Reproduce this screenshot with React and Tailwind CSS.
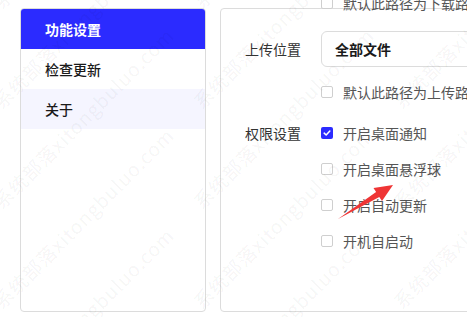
const FONT = { fontFamily: '"Noto Sans CJK SC", "Noto Sans", sans-serif' };

function Box({ checked }) {
  if (checked) {
    return (
      <span className="flex h-3 w-3 shrink-0 items-center justify-center rounded-[2px] bg-[#2b2bff]">
        <svg viewBox="0 0 12 12" className="h-[10px] w-[10px]">
          <path d="M2.6 6.2 L5 8.4 L9.4 3.6" fill="none" stroke="#fff" strokeWidth="1.8" strokeLinecap="round" strokeLinejoin="round" />
        </svg>
      </span>
    );
  }
  return <span className="h-3 w-3 shrink-0 rounded-[2px] border border-[#cfcfcf] bg-white" />;
}

function Option({ label, checked, className = '' }) {
  return (
    <div className={`flex h-5 items-center ${className}`}>
      <span className="w-[76px] shrink-0" />
      <Box checked={checked} />
      <span className="ml-[10px] whitespace-nowrap text-[14px] text-[#555]">{label}</span>
    </div>
  );
}

const marks = [];
for (let i = 0; i < 3; i++) {
  for (let j = 0; j < 5; j++) {
    marks.push({ x: 3 + 200 * i, y: -8 + 100 * j });
  }
}

export default function App() {
  return (
    <div className="relative h-[317px] w-[467px] overflow-hidden bg-white" style={FONT}>
      <div className="flex gap-[14px] pl-5 pt-2">
        {/* menu */}
        <div className="h-[304px] w-[186px] shrink-0 overflow-hidden rounded-[4px] border border-[#dcdcdc] bg-white">
          <div className="flex h-10 items-center bg-[#2b2bff] pl-6 text-[14px] font-bold text-white">功能设置</div>
          <div className="flex h-10 items-center pl-6 text-[14px] font-medium text-[#1a1a1a]">检查更新</div>
          <div className="flex h-10 items-center bg-[#f5f5ff] pl-6 text-[14px] font-medium text-[#1a1a1a]">关于</div>
        </div>

        {/* settings */}
        <div className="h-[304px] w-[300px] shrink-0 rounded-[4px] border border-[#dcdcdc] bg-white pl-6">
          <Option label="默认此路径为下载路径" className="-mt-4" />
          <div className="mt-[18px] flex h-9 items-center">
            <span className="w-[76px] shrink-0 text-[14px] text-[#333]">上传位置</span>
            <div className="flex h-9 flex-1 items-center rounded-[6px] border border-[#dcdcdc] pl-[13px] text-[14px] font-bold text-[#1a1a1a]">
              全部文件
            </div>
          </div>
          <Option label="默认此路径为上传路径" className="mt-[15px]" />
          <div className="mt-[21px] flex h-5 items-center">
            <span className="w-[76px] shrink-0 text-[14px] text-[#333]">权限设置</span>
            <Box checked />
            <span className="ml-[10px] whitespace-nowrap text-[14px] text-[#555]">开启桌面通知</span>
          </div>
          <Option label="开启桌面悬浮球" className="mt-4" />
          <Option label="开启自动更新" className="mt-4" />
          <Option label="开机自启动" className="mt-4" />
        </div>
      </div>

      {/* arrow annotation */}
      <svg className="pointer-events-none absolute left-0 top-0" width="467" height="317">
        <polygon
          points="338,219 376.1,191.9 373.5,188 393,185 382,201 379.3,197.1"
          fill="#ef3535"
        />
      </svg>

      {/* watermark */}
      <div className="pointer-events-none absolute inset-0">
        {marks.map((m, k) => (
          <span
            key={k}
            className="absolute origin-bottom-left -rotate-45 whitespace-nowrap text-[19px] leading-none tracking-[1px] text-black/[0.05]"
            style={{ left: m.x, top: m.y }}
          >
            系统部落xitongbuluo.com
          </span>
        ))}
      </div>
    </div>
  );
}
